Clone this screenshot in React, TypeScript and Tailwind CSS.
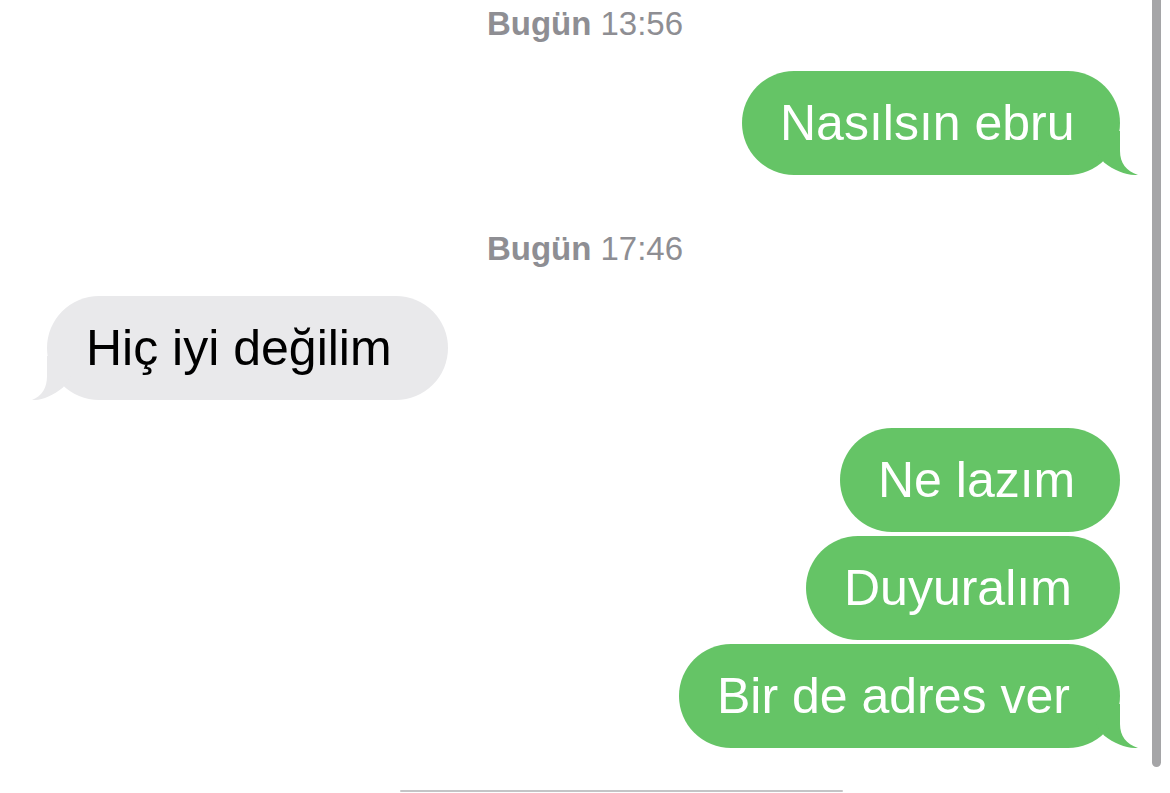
import type { ReactNode } from "react"

type Msg = { text: string; width: number; tail?: boolean }

function Stamp({ day, time }: { day: string; time: string }) {
  return (
    <div className="flex h-[48px] items-center justify-center text-[33px] text-[#8e8e93]">
      <span className="font-bold">{day}</span>
      <span className="ml-[9px]">{time}</span>
    </div>
  )
}

// iMessage style tail, bottom corner of the bubble
function Tail({ side, color }: { side: "left" | "right"; color: string }) {
  if (side === "right") {
    return (
      <svg
        aria-hidden
        viewBox="0 0 42 44"
        className="pointer-events-none absolute -right-[18px] bottom-0 h-[44px] w-[42px]"
      >
        <path d="M24 0 L24 20 C24 32 30 40 42 44 C32 44.5 19 40.5 8 31.5 L0 20 L0 0 Z" fill={color} />
      </svg>
    )
  }
  return (
    <svg
      aria-hidden
      viewBox="0 0 39 44"
      className="pointer-events-none absolute -left-[15px] bottom-0 h-[44px] w-[39px] -scale-x-100"
    >
      <path d="M24 0 L24 20 C24 32 29 40 39 44 C30 44.5 19 40.5 8 31.5 L0 20 L0 0 Z" fill={color} />
    </svg>
  )
}

function Sent({ text, width, tail }: Msg) {
  return (
    <div className="flex justify-end pr-[50px]">
      <div
        className="relative flex h-[104px] items-center rounded-full bg-[#65c466] pl-[38px] text-white"
        style={{ width }}
      >
        <span className="relative z-10 whitespace-nowrap">{text}</span>
        {tail && <Tail side="right" color="#65c466" />}
      </div>
    </div>
  )
}

function Received({ children, width }: { children: ReactNode; width: number }) {
  return (
    <div className="flex justify-start pl-[47px]">
      <div
        className="relative flex h-[104px] items-center rounded-full bg-[#e9e9eb] pl-[39px] text-black"
        style={{ width }}
      >
        <span className="relative z-10 whitespace-nowrap">{children}</span>
        <Tail side="left" color="#e9e9eb" />
      </div>
    </div>
  )
}

const BURST: Msg[] = [
  { text: "Ne lazım", width: 280 },
  { text: "Duyuralım", width: 314 },
  { text: "Bir de adres ver", width: 441, tail: true },
]

export default function App() {
  return (
    <div
      className="relative h-[793px] w-[1170px] overflow-hidden bg-white text-[50px] leading-normal"
      style={{ fontFamily: '"Liberation Sans", Arial, sans-serif' }}
    >
      <div className="flex flex-col">
        <Stamp day="Bugün" time="13:56" />
        <div className="mt-[23px]">
          <Sent text="Nasılsın ebru" width={378} tail />
        </div>

        <div className="mt-[50px]">
          <Stamp day="Bugün" time="17:46" />
        </div>
        <div className="mt-[23px]">
          <Received width={401}>Hiç iyi değilim</Received>
        </div>

        <div className="mt-[28px] flex flex-col gap-[4px]">
          {BURST.map((m) => (
            <Sent key={m.text} {...m} />
          ))}
        </div>

        {/* top edge of the compose field, cut off by the screen */}
        <div className="ml-[400px] mt-[42px] h-[2px] w-[443px] rounded-full bg-[#c4c4c6]" />
      </div>

      {/* scroll indicator */}
      <div className="absolute right-[9px] top-0 h-[767px] w-[9px] rounded-b-full bg-[#a5a5a7]" />
    </div>
  )
}
